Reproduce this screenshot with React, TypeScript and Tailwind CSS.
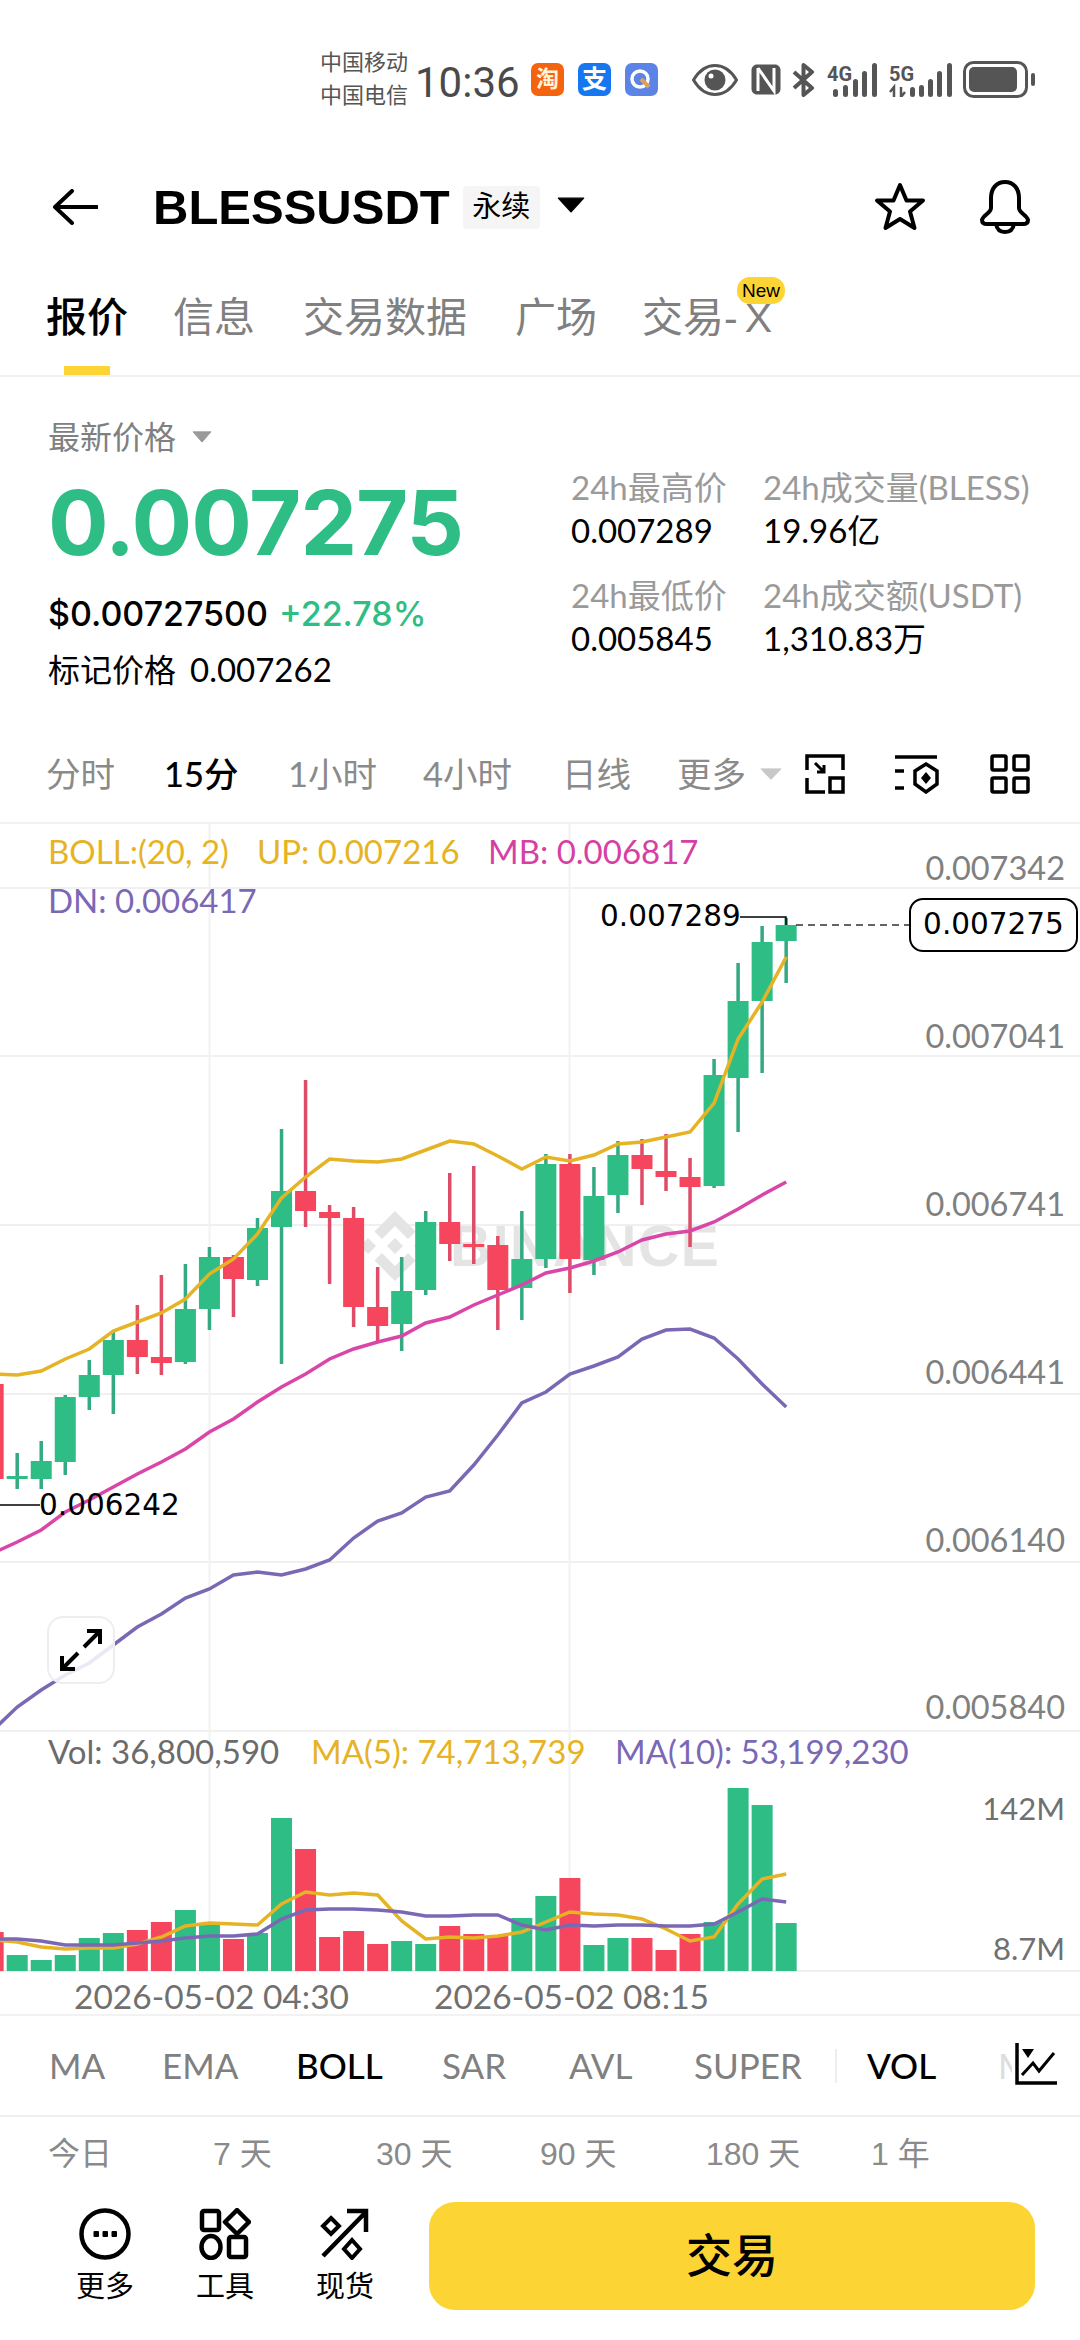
const GREEN = '#2ebd85';
const RED = '#f6465d';

// [wickTop, wickBottom, bodyTop, bodyBottom, up]
const candles: [number, number, number, number, boolean][] = [
  [1382, 1477, 1382, 1477, false],
  [1451, 1487, 1474, 1477, true],
  [1439, 1487, 1459, 1477, true],
  [1393, 1473, 1395, 1460, true],
  [1358, 1408, 1373, 1395, true],
  [1330, 1412, 1338, 1373, true],
  [1303, 1372, 1338, 1355, false],
  [1273, 1373, 1355, 1361, false],
  [1262, 1362, 1307, 1360, true],
  [1245, 1328, 1255, 1307, true],
  [1253, 1315, 1255, 1277, false],
  [1216, 1284, 1226, 1278, true],
  [1127, 1362, 1189, 1225, true],
  [1078, 1225, 1189, 1209, false],
  [1203, 1282, 1210, 1216, false],
  [1205, 1325, 1216, 1305, false],
  [1265, 1339, 1305, 1324, false],
  [1255, 1349, 1289, 1322, true],
  [1209, 1293, 1220, 1288, true],
  [1171, 1259, 1220, 1242, false],
  [1164, 1262, 1242, 1245, false],
  [1234, 1328, 1243, 1288, false],
  [1209, 1318, 1257, 1286, true],
  [1152, 1266, 1162, 1257, true],
  [1152, 1291, 1162, 1257, false],
  [1165, 1273, 1194, 1258, true],
  [1139, 1211, 1153, 1193, true],
  [1137, 1203, 1153, 1167, false],
  [1132, 1189, 1169, 1175, false],
  [1156, 1245, 1175, 1185, false],
  [1057, 1186, 1073, 1184, true],
  [961, 1130, 999, 1076, true],
  [924, 1071, 940, 999, true],
  [916, 981, 923, 939, true],
];

const bollUp = [1372, 1373, 1369, 1357, 1347, 1329, 1320, 1311, 1297, 1272, 1257, 1232, 1196, 1175, 1157, 1159, 1160, 1157, 1148, 1139, 1142, 1154, 1167, 1155, 1159, 1153, 1142, 1140, 1135, 1130, 1101, 1037, 1000, 955];
const bollMb = [1551, 1540, 1528, 1510, 1498, 1485, 1472, 1460, 1447, 1430, 1417, 1400, 1385, 1372, 1357, 1347, 1340, 1334, 1321, 1315, 1303, 1293, 1283, 1271, 1266, 1259, 1250, 1238, 1232, 1229, 1220, 1207, 1193, 1180];
const bollDn = [1728, 1705, 1688, 1673, 1661, 1643, 1625, 1612, 1596, 1587, 1573, 1570, 1573, 1567, 1558, 1536, 1519, 1511, 1495, 1489, 1463, 1433, 1401, 1390, 1372, 1364, 1355, 1337, 1328, 1327, 1336, 1357, 1382, 1405];

const volTops = [1930, 1953, 1958, 1953, 1936, 1931, 1928, 1920, 1908, 1923, 1937, 1931, 1816, 1847, 1935, 1929, 1942, 1939, 1942, 1924, 1932, 1934, 1916, 1894, 1876, 1943, 1936, 1936, 1948, 1932, 1920, 1786, 1803, 1921];
const volUp = [false, true, true, true, true, true, false, false, true, true, false, true, true, false, false, false, false, true, true, false, false, false, true, true, false, true, true, false, false, false, true, true, true, true];
const ma5 = [1938, 1940, 1945, 1947, 1946, 1946, 1942, 1935, 1924, 1921, 1922, 1923, 1902, 1890, 1893, 1891, 1893, 1919, 1937, 1935, 1936, 1934, 1930, 1920, 1910, 1912, 1913, 1917, 1927, 1939, 1935, 1902, 1877, 1872];
const ma10 = [1937, 1937, 1939, 1943, 1943, 1943, 1941, 1939, 1936, 1934, 1934, 1932, 1917, 1908, 1907, 1907, 1908, 1910, 1914, 1914, 1913, 1913, 1923, 1928, 1923, 1924, 1923, 1923, 1924, 1924, 1922, 1910, 1897, 1900];

const xAt = (idx: number) => 17.2 + 24.03 * (idx - 1);
const linePoints = (ys: number[]) => ys.map((y, idx) => `${xAt(idx).toFixed(1)},${y}`).join(' ');

const gridYs = [886, 1054, 1223, 1392, 1560, 1729];
const axisLabels = [
  { text: '0.007342', cls: 'top-[24px]' },
  { text: '0.007041', cls: 'top-[192px]' },
  { text: '0.006741', cls: 'top-[360px]' },
  { text: '0.006441', cls: 'top-[528px]' },
  { text: '0.006140', cls: 'top-[696px]' },
  { text: '0.005840', cls: 'top-[863px]' },
];

const tabs = [
  { label: '信息', cls: 'w-[130px]' },
  { label: '交易数据', cls: 'w-[212px]' },
  { label: '广场', cls: 'w-[127px]' },
];

const intervals = [
  { label: '分时', cls: 'w-[118px] text-[#8a8a8a]' },
  { label: '15分', cls: 'w-[124px] text-black font-medium' },
  { label: '1小时', cls: 'w-[135px] text-[#8a8a8a]' },
  { label: '4小时', cls: 'w-[139px] text-[#8a8a8a]' },
  { label: '日线', cls: 'w-[115px] text-[#8a8a8a]' },
  { label: '更多', cls: 'w-[83px] text-[#8a8a8a]' },
];

const indicators = [
  { label: 'MA', cls: 'w-[113px] text-[#808080]' },
  { label: 'EMA', cls: 'w-[134px] text-[#808080]' },
  { label: 'BOLL', cls: 'w-[146px] text-black font-medium' },
  { label: 'SAR', cls: 'w-[127px] text-[#808080]' },
  { label: 'AVL', cls: 'w-[125px] text-[#808080]' },
  { label: 'SUPER', cls: 'w-[141px] text-[#808080]' },
];

const ranges = [
  { label: '今日', cls: 'w-[165px]' },
  { label: '7 天', cls: 'w-[163px]' },
  { label: '30 天', cls: 'w-[164px]' },
  { label: '90 天', cls: 'w-[166px]' },
  { label: '180 天', cls: 'w-[165px]' },
  { label: '1 年', cls: 'w-[60px]' },
];

const Triangle = ({ cls }: { cls: string }) => (
  <svg viewBox="0 0 20 14" className={cls} preserveAspectRatio="none">
    <path d="M1 1H19L10 13Z" fill="currentColor" stroke="currentColor" strokeLinejoin="round" />
  </svg>
);

const StatusBar = () => (
  <div className="flex h-[130px] items-start pl-[320px] pt-[63px] text-[#555555]">
    <div className="mt-[-17px] flex w-[95px] flex-col text-[22px] leading-[33px]">
      <span>中国移动</span>
      <span>中国电信</span>
    </div>
    <span className="w-[116px] font-['Roboto','Noto_Sans_CJK_SC',sans-serif] text-[42px] leading-[40px] text-[#4a4a4a]">10:36</span>
    <div className="flex h-[33px] w-[33px] items-center justify-center rounded-[7px] bg-[#f4630f] text-[23px] font-bold leading-none text-[#fff3d6]">淘</div>
    <div className="ml-[14px] flex h-[33px] w-[33px] items-center justify-center rounded-[7px] bg-[#1677f0] text-[25px] font-bold leading-none text-white">支</div>
    <div className="ml-[14px] flex h-[33px] w-[33px] items-center justify-center rounded-[7px] bg-[#5b84e6]">
      <svg viewBox="0 0 33 33" className="h-[33px] w-[33px]">
        <circle cx="15" cy="16" r="8" fill="none" stroke="#ffffff" strokeWidth="3.5" />
        <path d="M16 16L24 24" stroke="#d9a06a" strokeWidth="4" />
      </svg>
    </div>
    <svg viewBox="0 0 46 32" className="ml-[34px] mt-[1px] h-[32px] w-[46px]">
      <path d="M1.5 16C8 5 15 1.5 23 1.5S38 5 44.5 16C38 27 31 30.5 23 30.5S8 27 1.5 16Z" fill="none" stroke="#555555" strokeWidth="3" strokeLinejoin="round" />
      <circle cx="23" cy="16" r="10.5" fill="#555555" />
      <circle cx="19" cy="12" r="2.5" fill="#ffffff" />
    </svg>
    <svg viewBox="0 0 32 33" className="ml-[12px] h-[33px] w-[32px]">
      <path d="M7 1.5H25C28 1.5 30.5 4 30.5 7V26C30.5 29 28 31.5 25 31.5H7C4 31.5 1.5 29 1.5 26V7C1.5 4 4 1.5 7 1.5Z" fill="#555555" />
      <path d="M8 5V28M8 5L24 28V5" fill="none" stroke="#ffffff" strokeWidth="3" />
    </svg>
    <svg viewBox="0 0 23 34" className="ml-[10px] h-[34px] w-[23px]">
      <path d="M2 9L20 25L11.5 32V2L20 9L2 25" fill="none" stroke="#555555" strokeWidth="4" strokeLinejoin="round" />
    </svg>
    <div className="ml-[12px] flex h-[34px] w-[50px] items-end">
      <span className="mb-[13px] w-[0px] font-['Roboto',sans-serif] text-[20px] font-bold leading-[20px]">4G</span>
      <svg viewBox="0 0 50 34" className="h-[34px] w-[50px]">
        <rect x="6" y="26" width="5" height="8" rx="2.5" fill="#555555" />
        <rect x="16" y="22" width="5" height="12" rx="2.5" fill="#555555" />
        <rect x="26" y="16" width="5" height="18" rx="2.5" fill="#555555" />
        <rect x="35" y="8" width="5" height="26" rx="2.5" fill="#555555" />
        <rect x="45" y="0" width="5" height="34" rx="2.5" fill="#555555" />
      </svg>
    </div>
    <div className="ml-[12px] flex h-[34px] w-[63px] items-end">
      <span className="mb-[13px] w-[0px] font-['Roboto',sans-serif] text-[20px] font-bold leading-[20px]">5G</span>
      <svg viewBox="0 0 63 34" className="h-[34px] w-[63px]">
        <path d="M5 34V24L1 29M12 24V34L16 29" fill="none" stroke="#555555" strokeWidth="2.5" />
        <rect x="21" y="24" width="5" height="10" rx="2.5" fill="#555555" />
        <rect x="30" y="22" width="5" height="12" rx="2.5" fill="#555555" />
        <rect x="39" y="16" width="5" height="18" rx="2.5" fill="#555555" />
        <rect x="48" y="8" width="5" height="26" rx="2.5" fill="#555555" />
        <rect x="58" y="0" width="5" height="34" rx="2.5" fill="#555555" />
      </svg>
    </div>
    <svg viewBox="0 0 72 37" className="ml-[11px] mt-[-2px] h-[37px] w-[72px]">
      <rect x="1.5" y="1.5" width="62" height="34" rx="9" fill="none" stroke="#555555" strokeWidth="3" />
      <rect x="6" y="6" width="48" height="25" rx="5" fill="#555555" />
      <rect x="68" y="12" width="4" height="13" rx="2" fill="#555555" />
    </svg>
  </div>
);

const Header = () => (
  <div className="flex h-[154px] items-center pl-[52px] text-black">
    <svg viewBox="0 0 46 36" className="h-[36px] w-[46px]">
      <path d="M20 2L3 18L20 34M3 18H45" fill="none" stroke="#000000" strokeWidth="4" strokeLinecap="round" strokeLinejoin="round" />
    </svg>
    <span className="ml-[55px] font-['Liberation_Sans',sans-serif] text-[49px] font-bold leading-none">BLESSUSDT</span>
    <span className="ml-[13px] flex h-[43px] w-[77px] items-center justify-center rounded-[4px] bg-[#f5f5f5] text-[29px] leading-none">永续</span>
    <Triangle cls="ml-[17px] mb-[4px] h-[16px] w-[28px] text-black" />
    <svg viewBox="0 0 52 50" className="ml-[289px] h-[50px] w-[52px]">
      <path d="M26 3L32.5 18.5H49L36 29.5L40.5 46L26 37L11.5 46L16 29.5L3 18.5H19.5Z" fill="none" stroke="#000000" strokeWidth="4" strokeLinejoin="round" />
    </svg>
    <svg viewBox="0 0 52 54" className="ml-[53px] h-[54px] w-[52px]">
      <path d="M26 2C17 2 12 9 12 18V28C12 33 4 35 3 40C3 43 5 44 8 44H44C47 44 49 43 49 40C48 35 40 33 40 28V18C40 9 35 2 26 2Z" fill="none" stroke="#000000" strokeWidth="4" strokeLinejoin="round" />
      <path d="M17 44C18 50 22 52 26 52S34 50 35 44" fill="none" stroke="#000000" strokeWidth="4" />
    </svg>
  </div>
);

const TabsBar = () => (
  <div className="flex h-[93px] border-b-[2px] border-[#f0f0f0] pl-[46px] pt-[10px] text-[41px] leading-[48px] text-[#808080]">
    <div className="flex w-[127px] flex-col">
      <span className="font-medium text-black">报价</span>
      <span className="ml-[18px] mt-[24px] h-[9px] w-[46px] bg-[#fcd535]" />
    </div>
    {tabs.map((tab) => (
      <span key={tab.label} className={tab.cls}>
        {tab.label}
      </span>
    ))}
    <span className="relative">
      交易
      <span className="tracking-[7px]">-X</span>
      <span className="absolute left-[95px] top-[-17px] flex h-[27px] w-[48px] items-center justify-center rounded-[13px] bg-[#fcd535] font-['Liberation_Sans',sans-serif] text-[19px] leading-none text-black">
        New
      </span>
    </span>
  </div>
);

const Stat = ({ label, value, cls }: { label: string; value: string; cls: string }) => (
  <div className={`flex flex-col ${cls}`}>
    <span className="text-[33px] leading-[40px] text-[#9a9a9a]">{label}</span>
    <span className="mt-[5px] text-[33px] leading-[36px] text-black">{value}</span>
  </div>
);

const PriceSummary = () => (
  <div className="flex h-[351px] pl-[48px] font-['Lato','Noto_Sans_CJK_SC',sans-serif]">
    <div className="flex w-[523px] flex-col">
      <div className="mt-[40px] flex h-[40px] items-center text-[32px] text-[#808080]">
        最新价格
        <Triangle cls="ml-[16px] h-[12px] w-[20px] text-[#9a9a9a]" />
      </div>
      <span className="mt-[21px] font-['Inter',sans-serif] text-[90px] font-bold leading-[90px] tracking-[-1px] text-[#2ebd85]">0.007275</span>
      <div className="mt-[25px] flex h-[40px] items-center font-['Inter',sans-serif] text-[34px] font-medium text-black">
        $0.00727500
        <span className="ml-[11px] text-[#2ebd85]">+22.78%</span>
      </div>
      <div className="mt-[17px] flex h-[40px] items-center text-[32px] text-black">
        标记价格
        <span className="ml-[14px] text-[33px]">0.007262</span>
      </div>
    </div>
    <div className="flex flex-col pt-[90px]">
      <div className="flex">
        <Stat label="24h最高价" value="0.007289" cls="w-[192px]" />
        <Stat label="24h成交量(BLESS)" value="19.96亿" cls="" />
      </div>
      <div className="mt-[27px] flex">
        <Stat label="24h最低价" value="0.005845" cls="w-[192px]" />
        <Stat label="24h成交额(USDT)" value="1,310.83万" cls="" />
      </div>
    </div>
  </div>
);

const IntervalBar = () => (
  <div className="flex h-[94px] items-center pb-[2px] pl-[46px] font-['Lato','Noto_Sans_CJK_SC',sans-serif] text-[34.5px]">
    {intervals.map((item) => (
      <span key={item.label} className={item.cls}>
        {item.label}
      </span>
    ))}
    <Triangle cls="h-[12px] w-[22px] text-[#c8c8c8]" />
    <svg viewBox="0 0 40 40" className="ml-[23px] h-[40px] w-[40px]">
      <path d="M2 16V2H38V16M2 24V38H20" fill="none" stroke="#000000" strokeWidth="3.5" />
      <rect x="25" y="24" width="13" height="14" fill="none" stroke="#000000" strokeWidth="3.5" />
      <path d="M10 9L19 18M19 11V18H12" fill="none" stroke="#000000" strokeWidth="3" />
    </svg>
    <svg viewBox="0 0 44 40" className="ml-[50px] h-[40px] w-[44px]">
      <path d="M0 3H42M0 17H9M0 34H9" fill="none" stroke="#000000" strokeWidth="3.5" />
      <path d="M31 10L42 17V30L31 38L20 30V17Z" fill="none" stroke="#000000" strokeWidth="3.5" />
      <path d="M31 18L36 24L31 30L26 24Z" fill="#000000" />
    </svg>
    <svg viewBox="0 0 40 40" className="ml-[51px] h-[40px] w-[40px]">
      <rect x="2" y="2" width="14" height="14" rx="1.5" fill="none" stroke="#000000" strokeWidth="3.5" />
      <rect x="24" y="2" width="14" height="14" rx="1.5" fill="none" stroke="#000000" strokeWidth="3.5" />
      <rect x="2" y="24" width="14" height="14" rx="1.5" fill="none" stroke="#000000" strokeWidth="3.5" />
      <rect x="24" y="24" width="14" height="14" rx="1.5" fill="none" stroke="#000000" strokeWidth="3.5" />
    </svg>
  </div>
);

const Chart = () => (
  <div className="relative h-[1194px] border-b-[2px] border-t-[2px] border-[#f2f2f2] font-['Lato',sans-serif]">
    <svg viewBox="0 822 1080 1190" className="absolute inset-0 h-[1190px] w-[1080px]">
      {gridYs.map((y) => (
        <line key={y} x1="0" x2="1080" y1={y} y2={y} stroke="#f0f0f0" strokeWidth="2" />
      ))}
      <line x1="0" x2="1080" y1="1969" y2="1969" stroke="#efefef" strokeWidth="2" />
      <line x1="209.5" x2="209.5" y1="822" y2="1969" stroke="#f2f2f2" strokeWidth="2" />
      <line x1="569.5" x2="569.5" y1="822" y2="1969" stroke="#f2f2f2" strokeWidth="2" />

      <g transform="translate(395 1244)" fill="#e4e4e4">
        <path d="M0-35L20.5-14.5L13-7L0-20L-13-7L-20.5-14.5Z" />
        <path d="M0 35L20.5 14.5L13 7L0 20L-13 7L-20.5 14.5Z" />
        <path d="M0-8L8 0L0 8L-8 0Z" />
        <path d="M-27-8L-19 0L-27 8L-35 0Z" />
        <path d="M27-8L35 0L27 8L19 0Z" />
      </g>
      <text x="450" y="1264" fontFamily="Liberation Sans" fontWeight="700" fontSize="57" letterSpacing="1.5" fill="#e4e4e4">BINANCE</text>

      {candles.map(([wt, wb, bt, bb, up], idx) => (
        <g key={idx}>
          <rect x={xAt(idx) - 1.75} y={wt} width="3.5" height={wb - wt} fill={up ? '#35a983' : '#de4c67'} />
          <rect x={xAt(idx) - 10.5} y={bt} width="21" height={bb - bt} fill={up ? GREEN : RED} />
        </g>
      ))}
      <polyline points={linePoints(bollDn)} fill="none" stroke="#7b68b5" strokeWidth="3.5" />
      <polyline points={linePoints(bollMb)} fill="none" stroke="#d946a8" strokeWidth="3.5" />
      <polyline points={linePoints(bollUp)} fill="none" stroke="#e6b325" strokeWidth="3.5" />

      {volTops.map((top, idx) => (
        <rect key={idx} x={xAt(idx) - 10.5} y={top} width="21" height={1969 - top} fill={volUp[idx] ? GREEN : RED} />
      ))}
      <polyline points={linePoints(ma5)} fill="none" stroke="#e6b325" strokeWidth="3.5" />
      <polyline points={linePoints(ma10)} fill="none" stroke="#7b68b5" strokeWidth="3.5" />

      <path d="M740 915H786V923" fill="none" stroke="#000000" strokeWidth="1.5" />
      <path d="M796 923H909" fill="none" stroke="#333333" strokeWidth="1.5" strokeDasharray="7 5" />
      <path d="M0 1503H40" fill="none" stroke="#000000" strokeWidth="1.5" />
    </svg>

    <div className="absolute left-[48px] top-[7px] flex h-[40px] items-center text-[33px] leading-none">
      <span className="w-[209px] text-[#e6b325]">BOLL:(20, 2)</span>
      <span className="w-[231px] text-[#e6b325]">UP: 0.007216</span>
      <span className="text-[#d63fa3]">MB: 0.006817</span>
    </div>
    <span className="absolute left-[48px] top-[56px] text-[33px] leading-[40px] text-[#7b68b5]">DN: 0.006417</span>

    {axisLabels.map((label) => (
      <span key={label.text} className={`absolute right-[15px] text-[32.5px] leading-[40px] text-[#808080] ${label.cls}`}>
        {label.text}
      </span>
    ))}

    <span className="absolute left-[600px] top-[72px] font-['DejaVu_Sans',sans-serif] text-[29.5px] leading-[40px] text-black">0.007289</span>
    <span className="absolute left-[909px] top-[74px] flex h-[54px] w-[169px] items-center justify-center rounded-[14px] border-[2px] border-black bg-white font-['DejaVu_Sans',sans-serif] text-[29.5px] leading-none text-black">0.007275</span>
    <span className="absolute left-[39px] top-[661px] font-['DejaVu_Sans',sans-serif] text-[29.5px] leading-[40px] text-black">0.006242</span>

    <div className="absolute left-[47px] top-[792px] flex h-[68px] w-[68px] items-center justify-center rounded-[16px] border-[2px] border-[#eeeeee] bg-white/85">
      <svg viewBox="0 0 44 44" className="h-[44px] w-[44px]">
        <path d="M25 19L41 3M28 3H41V16M19 25L3 41M3 28V41H16" fill="none" stroke="#000000" strokeWidth="4" />
      </svg>
    </div>

    <div className="absolute left-[48px] top-[907px] flex h-[40px] items-center text-[33px] leading-none">
      <span className="w-[263px] text-[#6b6b6b]">Vol: 36,800,590</span>
      <span className="w-[304px] text-[#e6b325]">MA(5): 74,713,739</span>
      <span className="text-[#7b68b5]">MA(10): 53,199,230</span>
    </div>
    <span className="absolute right-[15px] top-[964px] text-[31px] leading-[40px] text-[#707070]">142M</span>
    <span className="absolute right-[15px] top-[1104px] text-[31px] leading-[40px] text-[#707070]">8.7M</span>
    <span className="absolute left-[74px] top-[1152px] text-[33.5px] leading-[40px] text-[#707070]">2026-05-02 04:30</span>
    <span className="absolute left-[434px] top-[1152px] text-[33.5px] leading-[40px] text-[#707070]">2026-05-02 08:15</span>
  </div>
);

const IndicatorBar = () => (
  <div className="relative flex h-[101px] items-center border-b-[2px] border-[#f0f0f0] pl-[49px] font-['Lato',sans-serif] text-[35px]">
    {indicators.map((item) => (
      <span key={item.label} className={item.cls}>
        {item.label}
      </span>
    ))}
    <span className="h-[34px] w-[2px] bg-[#eeeeee]" />
    <span className="ml-[30px] w-[131px] font-medium text-black">VOL</span>
    <span className="text-[#dddddd]">M</span>
    <div className="absolute left-[1012px] top-[27px] bg-white pl-[3px]">
      <svg viewBox="0 0 42 42" className="h-[42px] w-[42px]">
        <path d="M2 0V40H42" fill="none" stroke="#000000" strokeWidth="3.5" />
        <path d="M7 32L18 20L24 28L39 10" fill="none" stroke="#000000" strokeWidth="3" />
        <path d="M7 6H19L13 15Z" fill="#000000" />
      </svg>
    </div>
  </div>
);

const RangeBar = () => (
  <div className="flex h-[73px] items-center pl-[48px] text-[32px] text-[#8a8a8a]">
    {ranges.map((item) => (
      <span key={item.label} className={item.cls}>
        {item.label}
      </span>
    ))}
  </div>
);

const ActionBar = () => (
  <div className="flex pl-[45px] pt-[12px] text-black">
    <div className="flex w-[120px] flex-col items-center pt-[6px]">
      <svg viewBox="0 0 52 52" className="h-[52px] w-[52px]">
        <circle cx="26" cy="26" r="23.5" fill="none" stroke="#000000" strokeWidth="4.5" />
        <rect x="14.5" y="23" width="5.5" height="6" rx="1" fill="#000000" />
        <rect x="23.5" y="23" width="5.5" height="6" rx="1" fill="#000000" />
        <rect x="32.5" y="23" width="5.5" height="6" rx="1" fill="#000000" />
      </svg>
      <span className="mt-[7px] text-[29px] leading-[40px]">更多</span>
    </div>
    <div className="flex w-[120px] flex-col items-center pt-[6px]">
      <svg viewBox="0 0 52 52" className="h-[52px] w-[52px]">
        <rect x="3" y="3" width="17" height="19" rx="2" fill="none" stroke="#000000" strokeWidth="4.5" />
        <path d="M38 2L50 14L38 26L26 14Z" fill="none" stroke="#000000" strokeWidth="4.5" strokeLinejoin="round" />
        <ellipse cx="12" cy="39" rx="9.5" ry="11" fill="none" stroke="#000000" strokeWidth="4.5" />
        <rect x="30" y="29" width="17" height="20" rx="2" fill="none" stroke="#000000" strokeWidth="4.5" />
      </svg>
      <span className="mt-[7px] text-[29px] leading-[40px]">工具</span>
    </div>
    <div className="flex w-[120px] flex-col items-center pt-[6px]">
      <svg viewBox="0 0 52 52" className="h-[52px] w-[52px]">
        <path d="M4 48L46 5M28 3H47V24" fill="none" stroke="#000000" strokeWidth="4.5" />
        <path d="M12 10L20 18L12 26L4 18Z" fill="none" stroke="#000000" strokeWidth="4" />
        <path d="M33 32L41 41L33 50L25 41Z" fill="none" stroke="#000000" strokeWidth="4" />
      </svg>
      <span className="mt-[7px] text-[29px] leading-[40px]">现货</span>
    </div>
    <button className="ml-[24px] flex h-[108px] w-[606px] items-center justify-center rounded-[26px] bg-[#fcd535] text-[46px] font-medium text-black">
      交易
    </button>
  </div>
);

export default function App() {
  return (
    <div className="h-[2340px] w-[1080px] overflow-hidden bg-white font-['Liberation_Sans','Noto_Sans_CJK_SC',sans-serif]">
      <StatusBar />
      <Header />
      <TabsBar />
      <PriceSummary />
      <IntervalBar />
      <Chart />
      <IndicatorBar />
      <RangeBar />
      <ActionBar />
    </div>
  );
}
